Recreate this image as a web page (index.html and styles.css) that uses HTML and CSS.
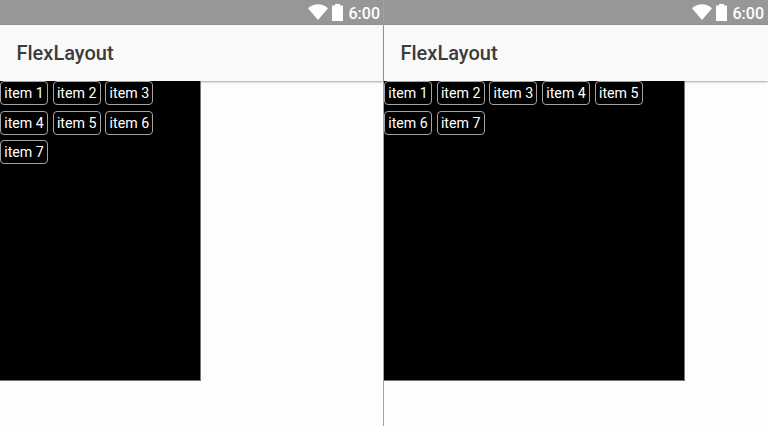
FILE: index.html
```html
<!DOCTYPE html>
<html lang="en">
<head>
<meta charset="utf-8">
<title>FlexLayout</title>
<link rel="stylesheet" href="styles.css">
</head>
<body>
<main class="screens">
  <section class="screen">
    <div class="status">
      <svg class="wifi" viewBox="0 0 20 16"><path d="M0 4.2C6-1.1 14-1.1 20 4.2L10 16Z"/></svg>
      <svg class="battery" viewBox="0 0 11 17"><path d="M3 0h5v1.6h3V17H0V1.6h3Z"/></svg>
      <span class="clock">6:00</span>
    </div>
    <header class="appbar">FlexLayout</header>
    <div class="flex narrow">
      <span class="item">item 1</span><span class="item">item 2</span><span class="item">item 3</span><span class="item">item 4</span><span class="item">item 5</span><span class="item">item 6</span><span class="item">item 7</span>
    </div>
  </section>
  <section class="screen second">
    <div class="status">
      <svg class="wifi" viewBox="0 0 20 16"><path d="M0 4.2C6-1.1 14-1.1 20 4.2L10 16Z"/></svg>
      <svg class="battery" viewBox="0 0 11 17"><path d="M3 0h5v1.6h3V17H0V1.6h3Z"/></svg>
      <span class="clock">6:00</span>
    </div>
    <header class="appbar">FlexLayout</header>
    <div class="flex wide">
      <span class="item">item 1</span><span class="item">item 2</span><span class="item">item 3</span><span class="item">item 4</span><span class="item">item 5</span><span class="item">item 6</span><span class="item">item 7</span>
    </div>
  </section>
</main>
</body>
</html>
```
FILE: styles.css
```css
* { box-sizing: border-box; }
body { margin: 0; font-family: Roboto, "Liberation Sans", sans-serif; background: #fdfdfd; }
.screens { display: grid; grid-template-columns: 383px 385px; height: 426px; overflow: hidden; }
.screen { background: #fdfdfd; }
.second { border-left: 1px solid #a3a3a3; }
.status {
  display: flex;
  justify-content: flex-end;
  height: 25px;
  padding: 4px 3px 0 0;
  background: #979797;
  color: #fff;
}
.second .status { padding-right: 4px; }
.wifi { width: 20px; height: 16px; margin-right: 4px; fill: #fff; }
.battery { width: 11px; height: 17px; margin-right: 5.5px; fill: #fff; }
.clock { width: 31.5px; font-size: 16px; font-weight: 500; line-height: 19px; white-space: nowrap; }
.appbar {
  height: 56px;
  padding-left: 16.5px;
  background: #f9f9f9;
  color: #3c3c3c;
  font-size: 20px;
  font-weight: 500;
  line-height: 57px;
  box-shadow: 0 1px 2px rgba(0, 0, 0, .35);
}
.flex {
  position: relative;
  display: flex;
  flex-wrap: wrap;
  align-content: flex-start;
  gap: 5.5px 4.7px;
  height: 299.5px;
  background: #000;
  border-right: 1px solid #777;
  border-bottom: 1px solid #777;
}
.narrow { width: 201px; }
.wide { width: 301px; }
.item {
  width: 48px;
  height: 24.4px;
  margin-bottom: -.4px;
  border: 1px solid #a4a4a4;
  border-radius: 4px;
  color: #fff;
  font-size: 14.2px;
  line-height: 22px;
  text-align: center;
  white-space: nowrap;
}
```
